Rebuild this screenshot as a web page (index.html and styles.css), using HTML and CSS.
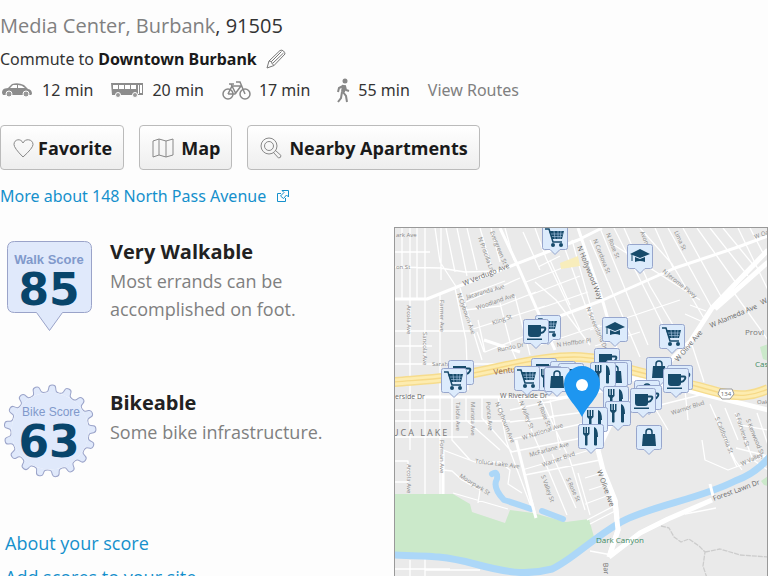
FILE: index.html
```html
<!DOCTYPE html>
<html lang="en">
<head>
<meta charset="UTF-8">
<meta name="viewport" content="width=device-width, initial-scale=1.0">
<title>148 North Pass Avenue - Walk Score</title>
<link rel="stylesheet" href="styles.css">
</head>
<body>

<div class="page">
    <header class="address">
        <h1 class="location"><a href="#">Media Center, Burbank</a>, 91505</h1>
        <div class="commute">
            <span>Commute to <strong>Downtown Burbank</strong></span>
            <button class="edit" aria-label="Edit commute">
                <svg width="20" height="20" viewBox="0 0 20 20" fill="none" stroke="#777" stroke-linejoin="round"><path d="M1 19l2-7L14 1.500q2-1 3.500.500t1.500 3L8 16.500z"/><path d="M3 12l2.500.500.500 2 2 2M5.500 12.500L15.500 2.500M6.500 14.500L17.500 4"/></svg>
            </button>
        </div>
        <ul class="times">
            <li class="drive">
                <svg width="34" height="16" viewBox="-1 0 34 16"><path fill="#8c8c8c" d="M1 11q0-4 3-4.500l3-.500 4-4q6-2 12 1l4 4q4 .500 4 5l-1 1H2z"/><path fill="#fff" d="M9 6l3-3h4v3zM17 3q4 0 7 3h-7z"/><circle cx="8" cy="12" r="3" fill="#999" stroke="#fff"/><circle cx="25" cy="12" r="3" fill="#999" stroke="#fff"/></svg>
                12 min
            </li>
            <li class="bus">
                <svg width="33" height="16" viewBox="0 0 33 16"><path fill="#8c8c8c" d="M0 1h32v12H1z"/><path fill="#fff" d="M2 3h5v4H2zM8 3h5v4H8zM14 3h5v4h-5zM20 3h5v4h-5zM27 3h1v9h-1zM29 3h2v8h-2z"/><circle cx="7" cy="13" r="2.500" fill="#999" stroke="#fff"/><circle cx="24" cy="13" r="2.500" fill="#999" stroke="#fff"/></svg>
                20 min
            </li>
            <li class="bike">
                <svg width="29" height="19" viewBox="0 0 29 19" fill="none" stroke="#888" stroke-width="1.500"><circle cx="6" cy="13" r="5"/><circle cx="23" cy="13" r="5"/><path d="M6 13l4-8h9l-6 8H6M10 5l4 8M23 13L18 1h-4M7 3h5M10 5L9 3"/></svg>
                17 min
            </li>
            <li class="walk">
                <svg width="14" height="25" viewBox="0 0 14 25" fill="none" stroke="#888"><circle cx="9" cy="3" r="2.500" fill="#888" stroke="none"/><path d="M8 7L7 14" stroke-width="4"/><path d="M7 8L3 10l-1 4M9 8l1 4 3 1M7 14l3 4 1 6M6 14l-1 6-3 4" stroke-width="2"/></svg>
                55 min
            </li>
            <li><a href="#">View Routes</a></li>
        </ul>
        <div class="actions">
            <button class="btn btn-fav">
                <svg width="21" height="20" viewBox="0 0 21 20" fill="none" stroke="#888"><path d="M10 19Q1 10 1 6.500C1 1 8 0 10 5 12 0 20 1 20 6.500Q20 10 10 19z"/></svg>
                Favorite
            </button>
            <button class="btn">
                <svg width="22" height="20" viewBox="0 0 22 20" fill="none" stroke="#888"><path d="M1 3l6-2 7 2 7-2v16l-7 2-7-2-6 2zM7 1v16M14 3v16"/></svg>
                Map
            </button>
            <button class="btn">
                <svg width="22" height="22" viewBox="0 0 22 22" fill="none" stroke="#888"><circle cx="9" cy="9" r="8"/><circle cx="9" cy="9" r="4.500"/><path d="M15 13l6 5.500q0 2.500-2.500 2.500L13 15"/></svg>
                Nearby Apartments
            </button>
        </div>
        <a class="more" href="#">More about 148 North Pass Avenue
            <svg width="14" height="14" viewBox="0 0 14 14" fill="none" stroke="currentColor"><path d="M5 4.500H1.500v8h8V9"/><path d="M6 1.500h6.500V8L10.500 6 7.500 9.500 4.500 7 8 3.500z"/></svg>
        </a>
    </header>

    <main class="detail">
        <section class="scores">
            <article class="score">
                <svg class="badge" width="98" height="98" viewBox="0 0 98 98">
                    <path class="badge-shape" d="M14.500 4.500h70q7 0 7 7v57q0 7-7 7H62.500L49.500 93.500 36.500 75.500H14.500q-7 0-7-7v-57q0-7 7-7z"/>
                    <text class="badge-name" x="49" y="27">Walk Score</text>
                    <text class="badge-num" x="49" y="68">85</text>
                </svg>
                <div class="score-text">
                    <h2>Very Walkable</h2>
                    <p>Most errands can be accomplished on foot.</p>
                </div>
            </article>
            <article class="score">
                <svg class="badge" width="98" height="98" viewBox="0 0 98 98">
                    <defs>
                        <path id="tooth" d="M-7.200-38.300C-4-38.900-3.800-40-3.400-43.500C-3-46.800 3-46.800 3.400-43.500C3.800-40 4-38.900 7.200-38.300"/>
                    </defs>
                    <g class="badge-shape" transform="translate(50 43)">
                        <use href="#tooth" transform="rotate(3)"/><use href="#tooth" transform="rotate(24.200)"/>
                        <use href="#tooth" transform="rotate(45.400)"/><use href="#tooth" transform="rotate(66.500)"/>
                        <use href="#tooth" transform="rotate(87.700)"/><use href="#tooth" transform="rotate(108.900)"/>
                        <use href="#tooth" transform="rotate(130.100)"/><use href="#tooth" transform="rotate(151.200)"/>
                        <use href="#tooth" transform="rotate(172.400)"/><use href="#tooth" transform="rotate(193.600)"/>
                        <use href="#tooth" transform="rotate(214.800)"/><use href="#tooth" transform="rotate(235.900)"/>
                        <use href="#tooth" transform="rotate(257.100)"/><use href="#tooth" transform="rotate(278.300)"/>
                        <use href="#tooth" transform="rotate(299.500)"/><use href="#tooth" transform="rotate(320.600)"/>
                        <use href="#tooth" transform="rotate(341.800)"/>
                        <circle r="38.500" stroke="none"/>
                    </g>
                    <text class="badge-name bike-name" x="51" y="28">Bike Score</text>
                    <text class="badge-num" x="49" y="69">63</text>
                </svg>
                <div class="score-text">
                    <h2>Bikeable</h2>
                    <p>Some bike infrastructure.</p>
                </div>
            </article>
            <nav class="links">
                <a href="#">About your score</a>
                <a href="#">Add scores to your site</a>
            </nav>
        </section>

        <section class="map" aria-label="Map of nearby places">
            <svg viewBox="395 228 372 348" preserveAspectRatio="xMinYMin slice">
                <defs>
                    <g id="pin"><path class="pin" d="M-10.500.500h21q2 0 2 2v20q0 2-2 2H5L0 29.500-5 24.500h-5.500q-2 0-2-2v-20q0-2 2-2z"/></g>
                    <g id="cart"><use href="#pin"/><path d="M-10 4h4l4 13h9" fill="none" stroke="#174b6b" stroke-width="1.500"/><path class="ink" d="M-6 6H9L7 14H-3z"/><path d="M-4 9H8M-3 11.500H7M-1 6l1 8M3 6v8M6 6l-1 8" stroke="#aecbe8" stroke-width=".6"/><circle class="ink" cx="-2" cy="20" r="2"/><circle class="ink" cx="6" cy="20" r="2"/></g>
                    <g id="cup"><use href="#pin"/><path class="ink" d="M-8 6H5v9q0 3-3 3h-7q-3 0-3-3zM-9 19.500H6V21H-9z"/><path d="M5 8.500h3q2 0 1 2.500-1 2.500-4 3" fill="none" stroke="#174b6b" stroke-width="2"/></g>
                    <g id="school"><use href="#pin"/><path class="ink" d="M-10 10L0 5l10 5-10 4zM-5 13l5 2 5-2v5q-5-2-10 0z"/><path d="M-8 10v7" stroke="#174b6b"/></g>
                    <g id="bag"><use href="#pin"/><path class="ink" d="M-6 9H6l1 12H-7z"/><path d="M-3 11V7q0-3 3-3t3 3v4" fill="none" stroke="#174b6b" stroke-width="1.500"/></g>
                    <g id="fork"><use href="#pin"/><path class="ink" d="M-8 3h1.500v6h1V3h1.500v6h1V3h1.500v7l-2 2v9q-1 1-2.500 0v-9l-2-2zM3 3q4 1 4 10H6v8q-1 1-3 0z"/></g>
                </defs>

                <rect class="land" x="394" y="227" width="800" height="800"/>
                <path class="park" d="M394 494H453L470 504 472 512 505 523 510 510 533 513 566 522 589 519 594 537 578 550 560 566 540 572H515L475 563 445 557 394 555zM768 476l-7 5 3 4 4 1z"/>
                <path class="park" d="M768 344l-8 3 3 12 5 2z"/>
                <path class="street" d="M402 228V299M410 228V299M417 228V299M425 228V299M435 228L440 262 457 288M446 228L455 272M457 228L467 276M467 228L477 270M480 228L491 265M491 228L500 262M505 228L514 260M394 267L440 268 465 272 498 271M441 228V280M394 331H470M394 346H432M394 364H500M410 299V397M425 299V364M440 294V494M455 288L466 340 468 390M465 310L500 306 536 292M466 302L520 278M470 294L505 281M470 330L545 306M478 320L485 352 540 330M484 352l-7-20M500 303L512 350 518 364M515 296L530 355M460 288L482 360"/>
                <path class="street" d="M523 232L540 270M535 228L546 258 580 330M394 252H430M550 260L570 305M565 249L590 318M538 267L560 256M526 282L570 265M530 295L580 276M535 310L588 292M535 282L556 300 590 345M572 240L600 340M590 240L640 357M600 228L648 345M614 228L673 345M624 228L650 286 683 342M640 228L672 264 705 320M655 228L674 270M668 228L712 308M683 228L723 300M697 228L736 283M710 228L748 276M723 228L755 267M738 228L768 290M750 228L764 255M690 305L706 311M685 314L703 322M590 330L680 300M595 346L640 332M540 345L600 325M680 354L692 345 704 382M732 290L768 340M614 245L700 300"/>
                <path class="street" d="M394 410H440M394 421H510M394 437H468M410 397V450M425 397V494M394 461H408V482H394M452 397V440L470 460M466 397L466 420 500 450M482 397L482 418 512 452M498 397L506 440 533 512M517 397L540 450 567 515M540 397L570 460 585 510M510 410L580 395M510 422L585 412M508 440L590 422M511 452L592 436M522 470L590 450M525 475L600 460M443 450L475 462 500 462 510 470 508 484 522 493M443 470L452 471 462 480 480 490 478 503M453 493L508 509M550 400L560 450M552 454L576 508M585 478L605 472M589 490L608 484M585 504L612 494M587 520L616 505M590 524L615 511M578 473L590 515M425 559V576M394 569H450M410 560V576M425 570H480"/>
                <path class="street" d="M655 408L668 430M660 405L700 395M710 404L735 460 742 470M725 408L738 440M735 413L753 460 768 470M757 413L768 445M740 425L768 430M736 448L768 456M730 452L737 467M702 440L705 460 728 470 768 455M685 390L688 420M590 551L612 555M685 514L716 508"/>
                <path class="road" d="M394 299L427 299 457 287 547 252 578 240 602 228M500 228L517 264 538 312 555 350M578 228L603 302 618 355M560 316L603 300 675 268 738 247 768 236M394 397L500 397 560 398 620 388M484 340L520 352M443 450L443 494M516 440L534 512"/>
                <path class="main-road" d="M768 250L712 308 690 342 655 375 610 425 598 450 603 470 615 500 618 530 609 557M768 262L715 309M609 557L640 533 668 519 712 500M620 376L691 391 768 410"/>
                <path class="river" d="M394 555C430 556 445 556 475 564S525 576 552 569C572 560 590 540 621 522 650 506 700 499 735 481 755 474 765 463 772 454"/>
                <path class="lake" d="M492 474Q498 470 497 479 492 487 504 500 520 505 531 509M542 511L563 519"/>
                <path class="main-road" d="M615 500L618 530 609 557"/>
                <path class="road" d="M710 484L713 496M531 500L536 518"/>
                <path class="freeway-edge" d="M394 382C430 379 445 380 507 366S600 355 631 370C665 379 690 384 721 393 740 397 752 396 768 389"/>
                <path class="freeway" d="M394 382C430 379 445 380 507 366S600 355 631 370C665 379 690 384 721 393 740 397 752 396 768 389"/>
                <path class="freeway-line" d="M394 382C430 379 445 380 507 366S600 355 631 370C665 379 690 384 721 393 740 397 752 396 768 389"/>
                <path fill="#f8edbb" d="M560 263l18-7 2 10-19 3z"/>
                <path class="trail" d="M661 526l8 2 5 9 7 5 8-3 10 7 6 6-2 14 4 12M705 552l15-3 20 6 28 2"/>
                <path d="M720 389h12l2 5-4 5h-8l-4-5z" fill="#fff" stroke="#999"/>

                <g class="label">
                    <text x="396" y="237">ark Ave</text>
                    <text x="396" y="269">on St</text>
                    <text transform="translate(478 238) rotate(70)">N Priscilla Ln</text>
                    <text transform="translate(490 232) rotate(68)">Evergreen St</text>
                    <text transform="translate(467 299) rotate(-16)">Jacaranda Ave</text>
                    <text transform="translate(477 310) rotate(-19)">Woodland Ave</text>
                    <text transform="translate(493 325) rotate(-20)">Kling St</text>
                    <text transform="translate(407 305) rotate(90)">Arcola Ave</text>
                    <text transform="translate(440 300) rotate(90)">Farmer Ave</text>
                    <text transform="translate(457 294) rotate(70)">N Clybourn Ave</text>
                    <text transform="translate(423 332) rotate(90)">Sancola Ave</text>
                    <text transform="translate(498 352) rotate(-12)">Rundo Dr</text>
                    <text transform="translate(557 347) rotate(-8)">N Hoffbor Pl</text>
                    <text transform="translate(593 240) rotate(68)">N Cordova St</text>
                    <text transform="translate(606 234) rotate(68)">N Rose St</text>
                    <text transform="translate(640 232) rotate(68)">Avon St</text>
                    <text transform="translate(662 272) rotate(39)">N Jerome Pkwy</text>
                    <text transform="translate(586 308) rotate(67)">N Screenland Dr</text>
                    <text transform="translate(674 232) rotate(65)">Lima St</text>
                    <text x="432" y="366">Sarah</text>
                    <text transform="translate(456 402) rotate(90)">Talofa Ave</text>
                    <text transform="translate(471 402) rotate(90)">Mariota Ave</text>
                    <text transform="translate(486 402) rotate(85)">Ponca Ave</text>
                    <text transform="translate(495 403) rotate(68)">N Clybourn Ave</text>
                    <text transform="translate(519 402) rotate(68)">N Valley St</text>
                    <text transform="translate(537 402) rotate(68)">N Rose St</text>
                    <text transform="translate(523 440) rotate(-18)">W National Ave</text>
                    <text transform="translate(530 457) rotate(-16)">McFarlane Ave</text>
                    <text transform="translate(407 464) rotate(90)">Arcola Ave</text>
                    <text transform="translate(440 440) rotate(90)">Forman Ave</text>
                    <text transform="translate(475 463) rotate(7)">Toluca Lake Ave</text>
                    <text transform="translate(459 477) rotate(32)">Moorpark St</text>
                    <text transform="translate(543 467) rotate(-20)">Warner Blvd</text>
                    <text transform="translate(541 476) rotate(70)">S Valley St</text>
                    <text transform="translate(566 479) rotate(65)">S Rose St</text>
                    <text transform="translate(672 415) rotate(-18)">Warner Blvd</text>
                    <text transform="translate(715 418) rotate(68)">S California St</text>
                    <text transform="translate(735 414) rotate(72)">S Fairview St</text>
                    <text transform="translate(746 420) rotate(68)">S Kenwood St</text>
                    <text transform="translate(742 466) rotate(-25)">W Valley</text>
                    <text x="757" y="404">Oak</text>
                    <text transform="translate(755 239) rotate(-20)">W Oak</text>
                </g>
                <g class="label main-label">
                    <text transform="translate(464 286) rotate(-22)">W Verdugo Ave</text>
                    <text transform="translate(577 247) rotate(68)">N Hollywood Way</text>
                    <text transform="translate(711 328) rotate(-23)">W Alameda Ave</text>
                    <text transform="translate(762 305) rotate(-28)">W</text>
                    <text transform="translate(678 362) rotate(-50)">W Olive Ave</text>
                    <text x="395" y="399">erside Dr</text>
                    <text x="500" y="398">W Riverside Dr</text>
                    <text transform="translate(597 471) rotate(70)">W Olive Ave</text>
                    <text transform="translate(714 501) rotate(-20)">Forest Lawn Dr</text>
                    <text transform="translate(603 563) rotate(85)">Bar</text>
                    <text class="brown" transform="translate(494 375) rotate(-8)">Ventura</text>
                    <text class="shield" x="726" y="396">134</text>
                </g>
                <text class="area" x="392" y="436">UCA LAKE</text>
                <text class="place" x="745" y="335">Provi</text>
                <text class="place green" x="755" y="367">Cas</text>
                <text class="place green" x="596" y="543">Dark Canyon</text>

                <g>
                    <use href="#cart" x="555" y="225"/>
                    <use href="#school" x="640" y="244"/>
                    <use href="#school" x="615" y="317"/>
                    <use href="#cart" x="672" y="324"/>
                    <use href="#cart" x="548" y="315"/>
                    <use href="#cup" x="536" y="319"/>
                    <use href="#cup" x="461" y="360"/>
                    <use href="#cart" x="454" y="368"/>
                    <use href="#cup" x="544" y="358"/>
                    <use href="#bag" x="563" y="361"/>
                    <use href="#cup" x="571" y="363"/>
                    <use href="#fork" x="549" y="366"/>
                    <use href="#cart" x="527" y="366"/>
                    <use href="#bag" x="557" y="367"/>
                    <use href="#cup" x="607" y="348"/>
                    <use href="#bag" x="619" y="360"/>
                    <use href="#bag" x="615" y="362"/>
                    <use href="#fork" x="603" y="362"/>
                    <use href="#bag" x="659" y="357"/>
                    <use href="#cup" x="680" y="365"/>
                    <use href="#cup" x="676" y="368"/>
                    <use href="#bag" x="647" y="380"/>
                    <use href="#cup" x="649" y="385"/>
                    <use href="#cup" x="643" y="388"/>
                    <use href="#fork" x="616" y="386"/>
                    <use href="#fork" x="618" y="401"/>
                    <use href="#fork" x="595" y="407"/>
                    <use href="#fork" x="591" y="424"/>
                    <use href="#bag" x="649" y="425"/>
                </g>
                <path fill="#1e96f0" d="M582 417C576 404 564 397 564 384a18 18 0 0 1 36 0C600 397 588 404 582 417z"/>
                <circle cx="582" cy="385" r="6" fill="#fff"/>
            </svg>
        </section>
    </main>
</div>

</body>
</html>
```
FILE: styles.css
```css
body {
    font-family: "Open Sans", sans-serif;
    font-size: 16px;
    line-height: 24px;
    color: #333;
    background-color: #fdfdfd;
    margin: 0;
}
h1, h2, p, ul {
    margin: 0;
    padding: 0;
}
a {
    color: #1590cc;
    text-decoration: none;
}
a:hover {
    text-decoration: underline;
}
button {
    font-family: inherit;
    cursor: pointer;
}
svg {
    display: block;
    flex: none;
}
.page {
    display: flex;
    flex-direction: column;
    height: 100vh;
    overflow: hidden;
}
.address {
    padding-top: 11px;
}
.location {
    font-size: 20px;
    font-weight: normal;
    line-height: 30px;
}
.location a, .times a {
    color: #808080;
}
.commute, .times, .more {
    font-family: "Noto Sans", "Open Sans", sans-serif;
}
.commute {
    display: flex;
    align-items: center;
    gap: 9px;
    height: 24px;
    margin-top: 6px;
}
.commute strong {
    color: #1a1a1a;
}
.edit {
    border: none;
    background: none;
    padding: 0;
}
.times {
    display: flex;
    align-items: center;
    height: 24px;
    margin-top: 7px;
    list-style: none;
}
.times li {
    display: flex;
    align-items: center;
    gap: 8px;
    margin-right: 18px;
}
.times .walk {
    margin-left: 8px;
}
.actions {
    display: flex;
    gap: 15px;
    margin-top: 23px;
}
.btn {
    display: flex;
    align-items: center;
    gap: 7px;
    height: 45px;
    padding: 0 11px 0 12px;
    font-size: 18px;
    font-weight: bold;
    color: #1a1a1a;
    background: linear-gradient(#fff, #eee);
    border: 1px solid #bbb;
    border-radius: 4px;
}
.btn-fav {
    gap: 4px;
}
.more {
    display: flex;
    align-items: center;
    gap: 10px;
    margin-top: 14px;
}
.detail {
    flex: 1;
    display: grid;
    grid-template-columns: 394px 1fr;
    grid-template-rows: minmax(0, 1fr);
    min-height: 0;
    margin-top: 19px;
}
.score {
    display: flex;
    gap: 12px;
    height: 141px;
    padding-top: 10px;
}
.score-text {
    width: 240px;
    font-size: 18px;
    line-height: 28px;
    color: #808080;
}
.score-text h2 {
    font-size: 20px;
    line-height: 30px;
    color: #222;
}
.badge {
    overflow: visible;
}
.badge-shape {
    fill: #e0e9fb;
    stroke: #9aa3c9;
}
.badge-name {
    font: bold 13px "Liberation Sans", sans-serif;
    text-anchor: middle;
    fill: #8199cb;
}
.bike-name {
    font-size: 12px;
    font-weight: normal;
}
.badge-num {
    font: bold 44px "DejaVu Sans", sans-serif;
    text-anchor: middle;
    fill: #08456b;
}
.links {
    display: flex;
    flex-direction: column;
    gap: 6px;
    padding: 0 5px;
    font-size: 18px;
    line-height: 28px;
}
.map {
    border: 1px solid #999;
    border-bottom: none;
    overflow: hidden;
}
.map svg {
    width: 100%;
    height: 100%;
}
.land {
    fill: #eaeaea;
}
.park {
    fill: #cbe9ca;
}
.street, .road, .main-road, .river, .lake, .trail, .freeway, .freeway-edge, .freeway-line {
    fill: none;
    stroke: #fff;
    stroke-width: 1.3;
    stroke-linejoin: round;
}
.road {
    stroke-width: 3;
}
.main-road {
    stroke-width: 5;
}
.river {
    stroke: #acd7f8;
    stroke-width: 7;
}
.lake {
    stroke: #acd7f8;
    stroke-width: 6;
    stroke-linecap: round;
}
.trail {
    stroke: #ccc;
    stroke-dasharray: 5 1;
}
.freeway-edge {
    stroke: #f6dc8d;
    stroke-width: 10;
}
.freeway {
    stroke: #fdecb0;
    stroke-width: 7;
}
.freeway-line {
    stroke: #f6d987;
}
.label {
    font-size: 6px;
    fill: #888;
}
.main-label {
    font-size: 7px;
    fill: #666;
}
.main-label .brown {
    font-size: 8px;
    fill: #8a6050;
}
.main-label .shield {
    font-size: 6px;
    text-anchor: middle;
}
.area {
    font-size: 9px;
    letter-spacing: 2px;
    fill: #777;
}
.place {
    font-size: 8px;
    fill: #777;
}
.green {
    fill: #3f8a63;
}
.pin {
    fill: #dcebfc;
    stroke: #97a6cd;
}
.ink {
    fill: #174b6b;
}
```
